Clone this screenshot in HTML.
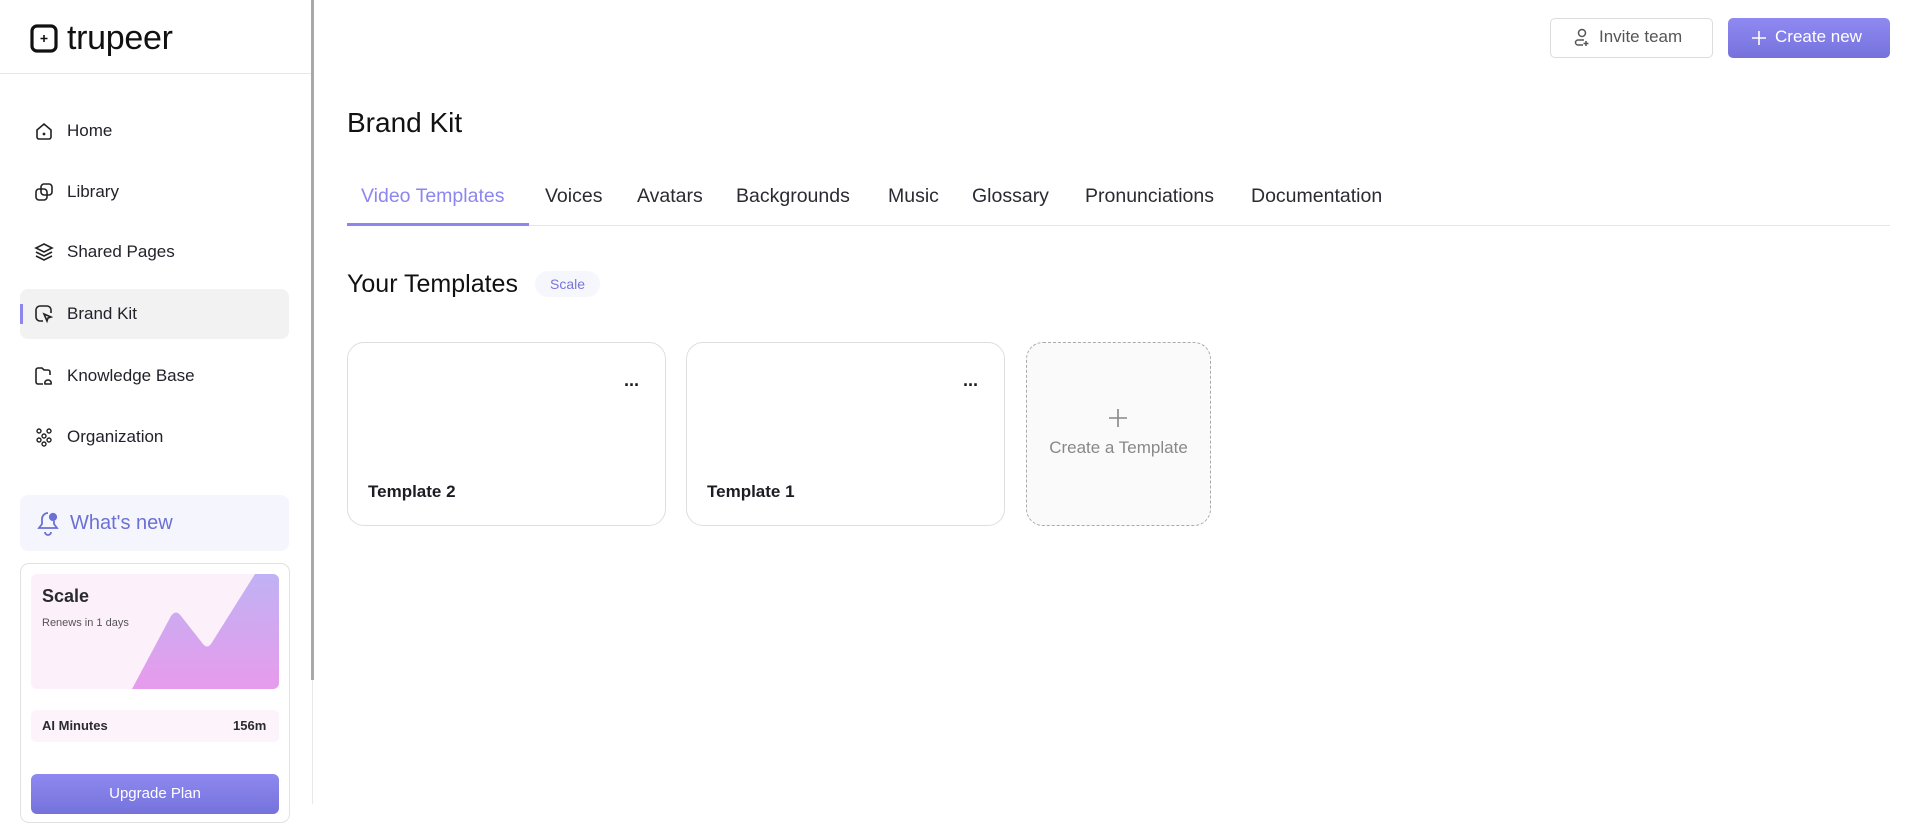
<!DOCTYPE html>
<html><head><meta charset="utf-8"><style>
*{box-sizing:border-box;margin:0;padding:0}
body{width:1920px;height:804px;overflow:hidden;background:#fff;font-family:"Liberation Sans",sans-serif;color:#1c1c24;position:relative}
.abs{position:absolute}
.side{left:0;top:0;width:313px;height:804px;border-right:1px solid #e8e8e8}
.scroll{left:311px;top:0;width:3px;height:680px;background:#a8a8a8}
.nav{position:absolute;left:20px;width:269px;height:50px;display:flex;align-items:center;font-size:17px;color:#22222a;border-radius:8px}
.nav svg{position:absolute;left:14px}
.nav span{position:absolute;left:47px}
.tab{position:absolute;top:185px;font-size:19.5px;color:#2a2a32}
.card{position:absolute;top:342px;width:319px;height:184px;border:1px solid #dedede;border-radius:17px;background:#fff}
.card b{position:absolute;left:20px;top:139px;font-size:17px;color:#1c1c24}
.dots{position:absolute;right:26px;top:37px;font-size:18px;font-weight:bold;letter-spacing:-1px;line-height:10px}
</style></head><body>
<div class="abs side"></div>
<div class="abs scroll"></div>
<div class="abs" style="left:0;top:73px;width:311px;height:1px;background:#e6e6e6"></div>
<svg class="abs" style="left:30px;top:24px" width="29" height="30" viewBox="0 0 29 30"><rect x="2" y="2" width="24" height="25" rx="5" fill="none" stroke="#111" stroke-width="3.2"/><path d="M14 11v7M10.5 14.5h7" stroke="#111" stroke-width="1.6"/></svg>
<div class="abs" style="left:67px;top:19px;font-size:34px;font-weight:500;letter-spacing:-0.3px;color:#111">trupeer</div>

<div class="nav" style="top:106px"><svg width="20" height="20" viewBox="0 0 20 20" fill="none" stroke="#222" stroke-width="1.6"><path d="M3 9l7-6 7 6v7a2 2 0 0 1-2 2H5a2 2 0 0 1-2-2z"/><circle cx="10" cy="13" r=".6" fill="#222"/></svg><span>Home</span></div>
<div class="nav" style="top:167px"><svg width="20" height="20" viewBox="0 0 20 20" fill="none" stroke="#222" stroke-width="1.6"><rect x="2" y="7" width="11" height="11" rx="3"/><rect x="7" y="2" width="11" height="11" rx="3"/></svg><span>Library</span></div>
<div class="nav" style="top:227px"><svg width="20" height="20" viewBox="0 0 20 20" fill="none" stroke="#222" stroke-width="1.6"><path d="M10 2l8 4-8 4-8-4z"/><path d="M2 10l8 4 8-4M2 14l8 4 8-4"/></svg><span>Shared Pages</span></div>
<div class="nav" style="top:289px;background:#f2f2f2"><div class="abs" style="left:0;top:15px;width:3px;height:20px;background:#8c86ee"></div><svg width="20" height="20" viewBox="0 0 20 20" fill="none" stroke="#222" stroke-width="1.6"><path d="M9 17H6a4 4 0 0 1-4-4V6a4 4 0 0 1 4-4h7a4 4 0 0 1 4 4v3"/><path d="M10 10l7 3-3 1-1 3z"/></svg><span>Brand Kit</span></div>
<div class="nav" style="top:351px"><svg width="20" height="20" viewBox="0 0 20 20" fill="none" stroke="#222" stroke-width="1.6"><path d="M9 18H4a2 2 0 0 1-2-2V4a2 2 0 0 1 2-2h4l2 2h4a2 2 0 0 1 2 2v3"/><path d="M11 18a3 3 0 0 1 3-4 3 3 0 0 1 3 4z"/></svg><span>Knowledge Base</span></div>
<div class="nav" style="top:412px"><svg width="20" height="20" viewBox="0 0 20 20" fill="none" stroke="#222" stroke-width="1.4"><circle cx="5" cy="4" r="2"/><circle cx="15" cy="4" r="2"/><circle cx="10" cy="9" r="2"/><circle cx="5" cy="13" r="2"/><circle cx="15" cy="13" r="2"/><circle cx="10" cy="17" r="2"/></svg><span>Organization</span></div>

<div class="abs" style="left:20px;top:495px;width:269px;height:56px;background:#f5f5fd;border-radius:8px"></div>
<svg class="abs" style="left:36px;top:510px" width="24" height="26" viewBox="0 0 24 26" fill="none" stroke="#6b70d6" stroke-width="1.8"><path d="M12 3a6 6 0 0 0-6 6v5l-3 4h18l-3-4v-3"/><path d="M9 22a3 3 0 0 0 6 0"/><circle cx="17" cy="7" r="3.2" fill="#6b70d6"/></svg>
<div class="abs" style="left:70px;top:512px;font-size:20px;color:#6b70d6">What's new</div>

<div class="abs" style="left:20px;top:563px;width:270px;height:260px;border:1px solid #e2e2e2;border-radius:9px"></div>
<div class="abs" style="left:31px;top:574px;width:248px;height:115px;background:#fcf0fa;border-radius:6px;overflow:hidden">
<svg width="248" height="115" viewBox="0 0 248 115" style="position:absolute;left:0;top:0"><defs><linearGradient id="g" x1="0" y1="0" x2="0" y2="1"><stop offset="0" stop-color="#c0b2f4"/><stop offset="1" stop-color="#e79bec"/></linearGradient></defs><path d="M101 115L140 42q5-7 10 0l22 28q4 5 8 0L224 0H248V115z" fill="url(#g)"/></svg>
</div>
<div class="abs" style="left:42px;top:586px;font-size:18px;font-weight:bold;color:#2a2a32">Scale</div>
<div class="abs" style="left:42px;top:617px;font-size:11px;color:#555">Renews in 1 days</div>
<div class="abs" style="left:31px;top:710px;width:248px;height:32px;background:#fdf3fa;border-radius:5px"></div>
<div class="abs" style="left:42px;top:718px;font-size:13px;font-weight:bold;color:#2a2a32">AI Minutes</div>
<div class="abs" style="left:233px;top:718px;font-size:13px;font-weight:bold;color:#2a2a32">156m</div>
<div class="abs" style="left:31px;top:774px;width:248px;height:40px;background:linear-gradient(#8d89f0,#7672dc);border-radius:6px;color:#fff;font-size:15px;text-align:center;padding-top:11px">Upgrade Plan</div>

<div class="abs" style="left:1550px;top:18px;width:163px;height:40px;border:1px solid #dcdcdc;border-radius:5px"></div>
<svg class="abs" style="left:1574px;top:28px" width="16" height="20" viewBox="0 0 16 20" fill="none" stroke="#555" stroke-width="1.5"><circle cx="8" cy="5" r="3.5"/><path d="M9 17H4a2.5 2.5 0 0 1 0-5h6"/><path d="M12 13v5M9.5 15.5h5"/></svg>
<div class="abs" style="left:1599px;top:27px;font-size:17px;color:#555">Invite team</div>
<div class="abs" style="left:1728px;top:18px;width:162px;height:40px;background:linear-gradient(#8f8af2,#7672dc);border-radius:5px"></div>
<svg class="abs" style="left:1752px;top:31px" width="14" height="14" viewBox="0 0 14 14" stroke="#fff" stroke-width="1.6"><path d="M7 0v14M0 7h14"/></svg>
<div class="abs" style="left:1775px;top:27px;font-size:17px;color:#fff">Create new</div>

<div class="abs" style="left:347px;top:107px;font-size:28px;color:#111">Brand Kit</div>
<div class="tab" style="left:361px;color:#8c86ee">Video Templates</div>
<div class="tab" style="left:545px">Voices</div>
<div class="tab" style="left:637px">Avatars</div>
<div class="tab" style="left:736px">Backgrounds</div>
<div class="tab" style="left:888px">Music</div>
<div class="tab" style="left:972px">Glossary</div>
<div class="tab" style="left:1085px">Pronunciations</div>
<div class="tab" style="left:1251px">Documentation</div>
<div class="abs" style="left:347px;top:225px;width:1543px;height:1px;background:#e6e6e6"></div>
<div class="abs" style="left:347px;top:223px;width:182px;height:3px;background:#8c86ee"></div>

<div class="abs" style="left:347px;top:270px;font-size:25px;color:#111">Your Templates</div>
<div class="abs" style="left:535px;top:271px;width:65px;height:26px;background:#f6f6fd;border-radius:13px;color:#7a76d8;font-size:14px;text-align:center;padding-top:5px">Scale</div>

<div class="card" style="left:347px"><div class="dots">···</div><b>Template 2</b></div>
<div class="card" style="left:686px"><div class="dots">···</div><b>Template 1</b></div>
<div class="abs" style="left:1026px;top:342px;width:185px;height:184px;border:1.5px dashed #aaa;border-radius:17px;background:#fafafa"></div>
<svg class="abs" style="left:1109px;top:409px" width="18" height="18" viewBox="0 0 18 18" stroke="#888" stroke-width="1.6"><path d="M9 0v18M0 9h18"/></svg>
<div class="abs" style="left:1026px;top:438px;width:185px;text-align:center;font-size:17px;color:#888">Create a Template</div>
</body></html>
